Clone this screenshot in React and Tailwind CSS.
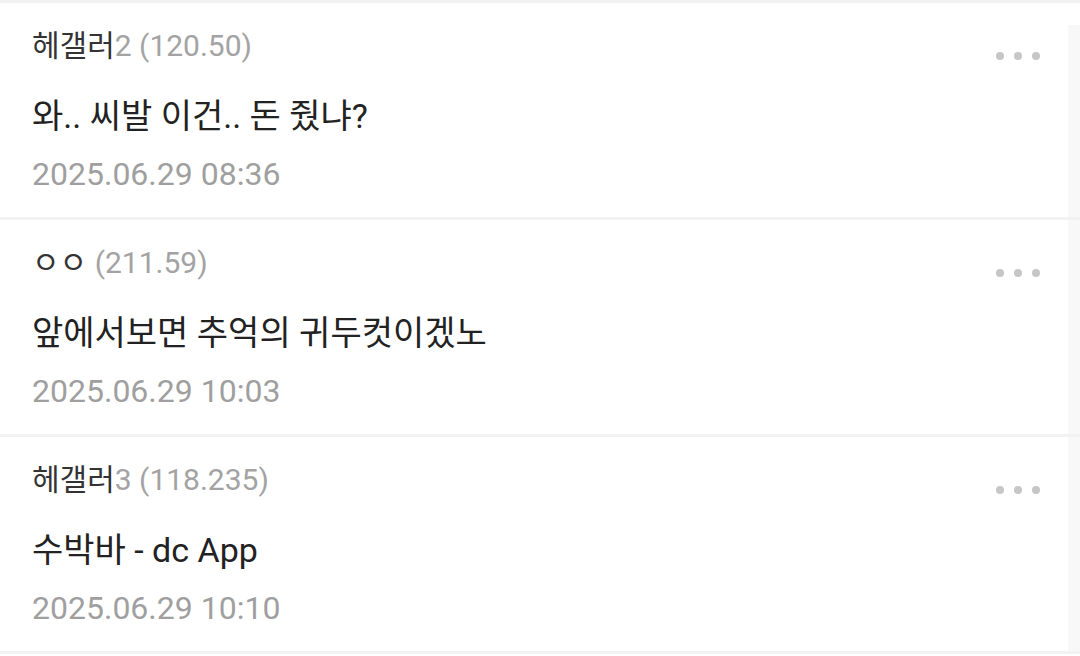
const comments = [
  { nick: "헤갤러", tail: "2 (120.50)", body: "와.. 씨발 이건.. 돈 줬냐?", date: "2025.06.29 08:36", first: true },
  { nick: "ㅇㅇ", tail: " (211.59)", body: "앞에서보면 추억의 귀두컷이겠노", date: "2025.06.29 10:03" },
  { nick: "헤갤러", tail: "3 (118.235)", body: "수박바 - dc App", date: "2025.06.29 10:10" },
];

const font = { fontFamily: 'Roboto, "Noto Sans CJK KR", sans-serif' };

function Dots() {
  return (
    <div className="flex gap-[10px] mt-[49px] mr-[28px]">
      <span className="w-[8px] h-[8px] rounded-full bg-[#c6c6c6]" />
      <span className="w-[8px] h-[8px] rounded-full bg-[#c6c6c6]" />
      <span className="w-[8px] h-[8px] rounded-full bg-[#c6c6c6]" />
    </div>
  );
}

function CommentRow({ c }) {
  return (
    <div className="flex h-[217px] border-b-[3px] border-[#f2f2f2]">
      <div className="flex-1 pl-[32px] pt-[23px]">
        <div className="text-[30px] leading-[40px] text-[#333]">
          {c.nick}
          <span className="text-[#a3a3a3]">{c.tail}</span>
        </div>
        <div className="mt-[28px] text-[34px] leading-[44px] text-[#222]">{c.body}</div>
        <div className="mt-[16px] text-[32px] leading-[40px] text-[#9f9f9f]">{c.date}</div>
      </div>
      <Dots />
      <div className={`w-[12px] bg-[#f8f8f8] ${c.first ? "mt-[22px]" : ""}`} />
    </div>
  );
}

export default function App() {
  return (
    <div className="w-[1080px] h-[656px] bg-white overflow-hidden border-t-[3px] border-[#f2f2f2]" style={font}>
      {comments.map((c, i) => (
        <CommentRow key={i} c={c} />
      ))}
    </div>
  );
}
